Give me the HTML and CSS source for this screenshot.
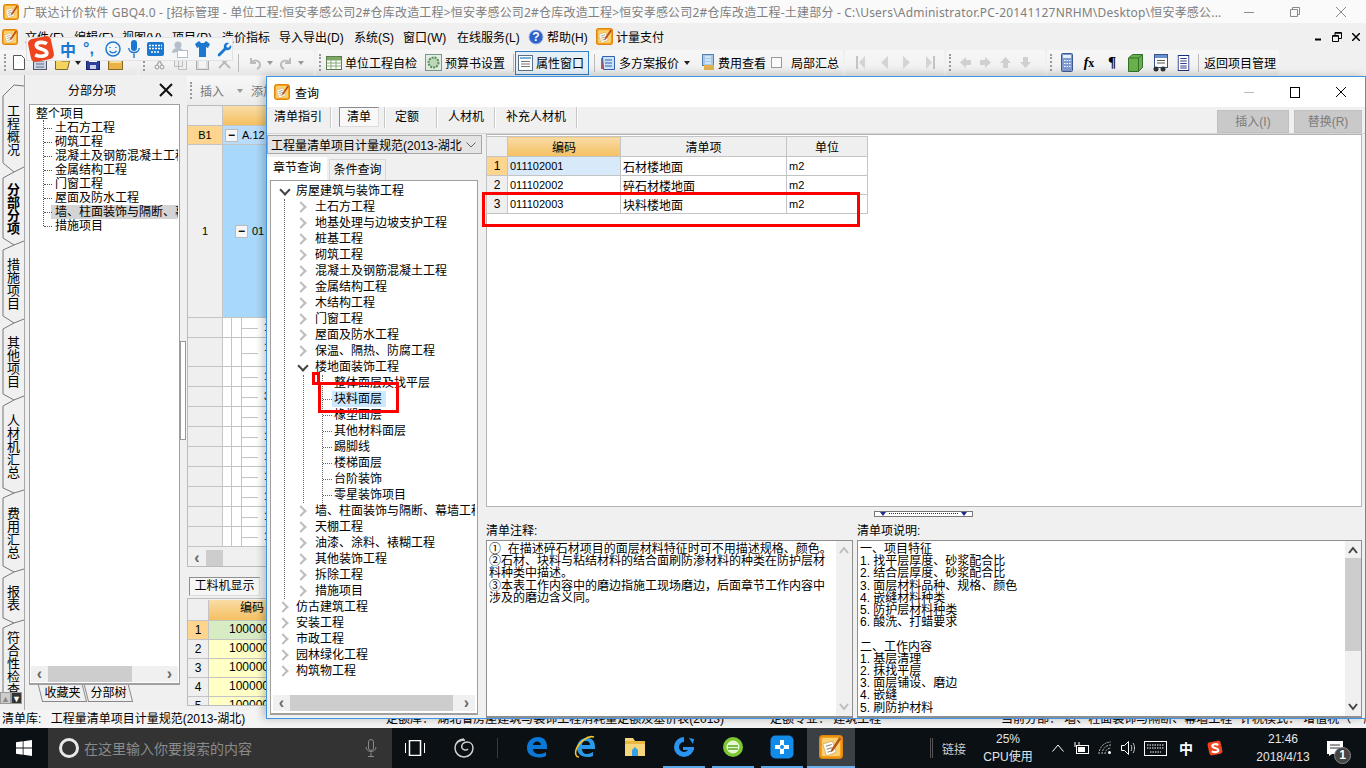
FILE: index.html
```html
<!DOCTYPE html>
<html lang="zh-CN">
<head>
  <meta charset="utf-8">
  <title>广联达计价软件 GBQ4.0</title>
  <link rel="stylesheet" href="styles.css">
</head>
<body>
  <svg class="icon-defs" width="0" height="0">
    <symbol id="i-logo" viewBox="0 0 16 16">
      <rect x=".5" y=".5" width="15" height="15" rx="2" fill="#f5a11c" stroke="#e0860e"/>
      <rect x="2" y="2" width="12" height="12" rx="1" fill="#fbd070"/>
      <path d="M2.500 6L9 4l2.500 7.500L5 14z" fill="#fffdf4" stroke="#c9a060" stroke-width=".5"/>
      <path d="M4.500 7.500l4-1.200M5 9.500l4-1.200M5.600 11.500l3-1" stroke="#8a8a80" stroke-width=".7"/>
      <path d="M13.500 1.500L15 2.500 9.500 10.500 8 11.500l.3-2z" fill="#b8501a"/>
    </symbol>
    <symbol id="i-sogou" viewBox="0 0 24 24">
      <rect x="2" y="2" width="20" height="20" rx="4" fill="#f0441e" transform="rotate(-12 12 12)"/>
      <path d="M17 7.500C14 5.500 8 6 8 9c0 3.500 9 2.500 9 6.500 0 3-6 3.500-10 1.500" fill="none" stroke="#fff" stroke-width="3.200"/>
    </symbol>
    <symbol id="i-sheet" viewBox="0 0 16 16">
      <rect x=".5" y="1.500" width="15" height="13" fill="#fff" stroke="#5d7a4a"/>
      <path d="M.5 5h15M.5 8h15M.5 11h15M5 1.500v13M10 1.500v13" stroke="#8aa878"/>
      <rect x="1" y="2" width="14" height="3" fill="#7ea866"/>
    </symbol>
    <symbol id="i-list" viewBox="0 0 16 16">
      <rect x="1.500" y=".5" width="13" height="15" fill="#fff" stroke="#1b2d80"/>
      <path d="M4 3.500h8M4 6h8M4 8.500h8M4 11h8M4 13h8" stroke="#1b2d80"/>
    </symbol>
    <symbol id="i-up" viewBox="0 0 10 8"><path d="M1 7l4-5 4 5" fill="none" stroke="currentColor" stroke-width="2"/></symbol>
    <symbol id="i-down" viewBox="0 0 10 8"><path d="M1 1l4 5 4-5" fill="none" stroke="currentColor" stroke-width="2"/></symbol>
  </svg>

  <div class="titlebar">
    <svg class="app-logo"><use href="#i-logo"/></svg>
    <span class="titlebar-text">广联达计价软件 GBQ4.0 - [招标管理 - 单位工程:恒安孝感公司2#仓库改造工程&gt;恒安孝感公司2#仓库改造工程&gt;恒安孝感公司2#仓库改造工程-土建部分 - C:\Users\Administrator.PC-20141127NRHM\Desktop\恒安孝感公...</span>
    <div class="win-controls muted">
      <svg width="10" height="10"><path d="M0 5.500h10" stroke="currentColor"/></svg>
      <svg width="10" height="10"><path d="M.5 2.500h7v7h-7zM2.500 2.500v-2h7v7h-2" fill="none" stroke="currentColor"/></svg>
      <svg width="10" height="10"><path d="M0 0l10 10M10 0L0 10" stroke="currentColor"/></svg>
    </div>
  </div>

  <div class="menubar">
    <svg class="app-logo"><use href="#i-logo"/></svg>
    <span class="menu-item m-file">文件(F)</span>
    <span class="menu-item m-w48">编辑(E)</span>
    <span class="menu-item m-w50">视图(V)</span>
    <span class="menu-item m-w50">项目(P)</span>
    <span class="menu-item m-w57">造价指标</span>
    <span class="menu-item m-w75">导入导出(D)</span>
    <span class="menu-item m-w49">系统(S)</span>
    <span class="menu-item m-w54">窗口(W)</span>
    <span class="menu-item m-w71">在线服务(L)</span>
    <svg class="menu-icon" width="16" height="16" viewBox="0 0 16 16"><circle cx="8" cy="8" r="7" fill="#2f62c8" stroke="#9ab4ea"/><text x="8" y="12" class="help-mark">?</text></svg>
    <span class="menu-item m-w49">帮助(H)</span>
    <svg class="menu-icon" width="17" height="17" viewBox="0 0 16 16"><use href="#i-logo"/></svg>
    <span class="menu-item">计量支付</span>
    <div class="win-controls mdi">
      <svg width="9" height="9"><path d="M2 7.500h6" stroke="#000" stroke-width="2"/></svg>
      <svg width="10" height="10"><path d="M.5 3.500h6v6h-6zM3 3V.5h6.500v6H7" fill="none" stroke="#000"/><path d="M1 4h5M3 1h6" stroke="#000" stroke-width="1.500"/></svg>
      <svg width="8" height="8"><path d="M0 0l8 8M8 0L0 8" stroke="#000" stroke-width="1.500"/></svg>
    </div>
  </div>

  <div class="toolbar">
    <div class="tb-group g-file">
      <i class="grip"></i>
      <svg class="tb-icon first" width="12" height="15"><path d="M.5.5h8l3 3v11H.5z" fill="#fff" stroke="#555"/></svg>
      <svg class="tb-icon" width="14" height="15" viewBox="0 0 14 15"><rect x=".5" y=".5" width="13" height="14" fill="#c8d6e8" stroke="#556"/><path d="M3 3h8M3 6h8M3 9h8M3 12h8" stroke="#667"/></svg>
      <svg class="tb-icon" width="15" height="14" viewBox="0 0 15 14"><path d="M.5 3.500h5l1 1.500h8l-2 8.500H.5z" fill="#f4d35e" stroke="#7a6a20"/></svg>
      <i class="caret"></i>
      <svg class="tb-icon gap-save" width="14" height="14"><rect x=".5" y=".5" width="13" height="13" fill="#2b3f9c" stroke="#1a2466"/><rect x="3" y="1" width="8" height="5" fill="#fff"/><rect x="4" y="9" width="6" height="4" fill="#c9cfe6"/></svg>
      <svg class="tb-icon" width="15" height="14"><rect x=".5" y=".5" width="14" height="13" fill="#e8b44a" stroke="#8a6a20"/><rect x="2" y="2" width="11" height="5" fill="#f6dc9a"/></svg>
    </div>
    <div class="tb-group g-edit">
      <i class="grip"></i>
      <svg class="tb-icon w-cut" width="11" height="14"><path d="M3 0l5 9M8 0L3 9" stroke="#aaa" stroke-width="1.500"/><circle cx="3" cy="11" r="2" fill="none" stroke="#999"/><circle cx="8" cy="11" r="2" fill="none" stroke="#999"/></svg>
      <svg class="tb-icon" width="13" height="14"><path d="M.5.5h8v10h-8zM4.500 3.500h8v10h-8z" fill="#eee" stroke="#bbb"/></svg>
      <svg class="tb-icon" width="13" height="14"><rect x=".5" y="1.500" width="12" height="12" fill="#ddd" stroke="#aaa"/><rect x="3" y="4" width="7" height="8" fill="#f4f4f4"/></svg>
      <svg class="tb-icon" width="13" height="13"><path d="M1 1l11 11M12 1L1 12" stroke="#bbb" stroke-width="2"/></svg>
      <i class="tb-sep sep-a"></i>
      <svg class="tb-icon" width="14" height="14"><path d="M3 2v5h5M3 7c3-4 9-3 9 2 0 2-1 3-3 4" fill="none" stroke="#bbb" stroke-width="2"/></svg>
      <i class="caret light"></i>
      <svg class="tb-icon gap-redo" width="14" height="14"><path d="M11 2v5H6M11 7C8 3 2 4 2 9c0 2 1 3 3 4" fill="none" stroke="#bbb" stroke-width="2"/></svg>
      <i class="caret light"></i>
    </div>
    <div class="tb-group g-main">
      <i class="grip"></i>
      <svg class="tb-icon" width="16" height="16"><use href="#i-sheet"/></svg>
      <span class="tb-label">单位工程自检</span>
      <svg class="tb-icon wide" width="17" height="17" viewBox="0 0 17 17"><rect x=".5" y=".5" width="16" height="16" fill="#dfeee0" stroke="#7a9a88"/><circle cx="8.500" cy="8.500" r="5" fill="#bcd8b8" stroke="#5f8a60" stroke-dasharray="2 1" stroke-width="2"/></svg>
      <span class="tb-label">预算书设置</span>
      <i class="tb-sep sep-b"></i>
      <div class="tb-toggle">
        <svg class="tb-icon" width="15" height="16"><rect x=".5" y=".5" width="14" height="15" fill="#fff" stroke="#5a7088"/><path d="M2 3h11" stroke="#78b0d8" stroke-width="2"/><path d="M3 6.500h9M3 9h9M3 11.500h9" stroke="#777"/></svg>
        <span class="tb-label">属性窗口</span>
      </div>
      <i class="tb-sep sep-c"></i>
      <svg class="tb-icon" width="16" height="16"><path d="M1 3h3v11H1z" fill="#d9524a"/><path d="M2.500 1.500h12v13h-11z" fill="#cfe2f6" stroke="#2d63b5"/><path d="M5 5h7M5 8h7M5 11h7" stroke="#2d63b5"/></svg>
      <span class="tb-label">多方案报价</span>
      <i class="caret"></i>
      <svg class="tb-icon far" width="14" height="17"><rect x="1.500" y=".5" width="11" height="11" fill="#a8c8ea" stroke="#5580b0"/><path d="M4 3h6M4 6h6M4 9h6" stroke="#fff"/><rect x="3" y="11" width="10" height="5" fill="#e0b050"/></svg>
      <span class="tb-label">费用查看</span>
      <i class="tb-check"></i>
      <span class="tb-label">局部汇总</span>
    </div>
    <div class="tb-group g-nav">
      <svg width="9" height="15"><path d="M1 1v13" stroke="#c4c4c4" stroke-width="2"/><path d="M9 1v13L3 7.500z" fill="#d4d4d4"/></svg>
      <svg width="8" height="15"><path d="M8 1v13L1 7.500z" fill="#d4d4d4"/></svg>
      <svg width="8" height="15"><path d="M0 1v13l7-6.500z" fill="#d4d4d4"/></svg>
      <svg width="9" height="15"><path d="M8 1v13" stroke="#c4c4c4" stroke-width="2"/><path d="M0 1v13l6-6.500z" fill="#d4d4d4"/></svg>
    </div>
    <div class="tb-group g-move">
      <i class="grip"></i>
      <svg class="tb-icon" width="11" height="11"><path d="M0 5.500L6 0v3h5v5H6v3z" fill="#d0d0d0"/></svg>
      <svg class="tb-icon" width="11" height="11"><path d="M11 5.500L5 0v3H0v5h5v3z" fill="#d0d0d0"/></svg>
      <svg class="tb-icon" width="11" height="11"><path d="M5.500 0L11 6H8v5H3V6H0z" fill="#d0d0d0"/></svg>
      <svg class="tb-icon" width="11" height="11"><path d="M5.500 11L11 5H8V0H3v5H0z" fill="#d0d0d0"/></svg>
    </div>
    <div class="tb-group g-tools">
      <i class="grip"></i>
      <svg class="tb-icon" width="12" height="19"><rect x=".5" y=".5" width="11" height="18" rx="1" fill="#7f9ad0" stroke="#3c5a90"/><rect x="2" y="2" width="8" height="3" fill="#e6eefc"/><path d="M3 7.500h1.500m1 0H7m1 0h1.500M3 10.500h1.500m1 0H7m1 0h1.500M3 13.500h1.500m1 0H7m1 0h1.500" stroke="#fff"/></svg>
      <span class="tb-glyph fx"><em>f</em>x</span>
      <span class="tb-glyph pilcrow">¶</span>
      <svg class="tb-icon" width="15" height="18"><path d="M.5 4l4-3.500h10v13L10.500 17.500H.5z" fill="#67b04a" stroke="#35702a"/><path d="M.5 4h10v13.500M10.500 4l4-3.500" fill="none" stroke="#35702a"/></svg>
      <svg class="tb-icon" width="16" height="18"><rect x="2.500" y=".5" width="13" height="13" fill="#fff" stroke="#35528a"/><path d="M3 2.500h12" stroke="#6c8fd0" stroke-width="3"/><path d="M5 6.500h8M5 9h8" stroke="#555"/><circle cx="4" cy="15" r="2.500" fill="#333"/><circle cx="11" cy="15" r="2.500" fill="#333"/></svg>
      <svg class="tb-icon" width="13" height="16" viewBox="0 0 16 16" preserveAspectRatio="none"><use href="#i-list"/></svg>
      <i class="tb-sep"></i>
      <span class="tb-label">返回项目管理</span>
    </div>
  </div>

  <div class="workspace">
    <div class="rail">
      <div class="rail-tab h-84">工程概况</div>
      <div class="rail-tab h-73 active">分部分项</div>
      <div class="rail-tab h-78">措施项目</div>
      <div class="rail-tab h-77">其他项目</div>
      <div class="rail-tab h-93">人材机汇总</div>
      <div class="rail-tab h-79">费用汇总</div>
      <div class="rail-tab h-51">报表</div>
      <div class="rail-tab h-80">符合性检查</div>
      <svg class="rail-lines" width="25" height="635" viewBox="0 75 25 635">
        <path d="M24.500 75V710" fill="none" stroke="#a8a8a8"/>
        <path d="M24 86L14 85 3 96V163L14 172 24 167M3 178L14 172M3 178V238L14 245 24 241M3 250L14 245M3 250V316L14 323 24 319M3 329L14 323M3 329V394L14 400 24 396M3 406L14 400M3 406V488L14 493 24 490M3 498L14 493M3 498V566L14 572 24 569M3 578L14 572M3 578V618L14 623 24 620M3 628L14 623M3 628V692" fill="none" stroke="#777"/>
      </svg>
      <div class="rail-arrows">
        <span class="rail-arrow off">▲</span>
        <span class="rail-arrow">▼</span>
      </div>
    </div>

    <div class="nav-pane">
      <div class="nav-head">
        <span>分部分项</span>
        <svg width="14" height="14"><path d="M1 1l12 12M13 1L1 13" stroke="#111" stroke-width="2"/></svg>
      </div>
      <div class="nav-tree">
        <div class="nav-root">整个项目</div>
        <div class="nav-children">
          <div class="nav-item">土石方工程</div>
          <div class="nav-item">砌筑工程</div>
          <div class="nav-item">混凝土及钢筋混凝土工程</div>
          <div class="nav-item">金属结构工程</div>
          <div class="nav-item">门窗工程</div>
          <div class="nav-item">屋面及防水工程</div>
          <div class="nav-item selected">墙、柱面装饰与隔断、幕墙工程</div>
          <div class="nav-item">措施项目</div>
        </div>
        <div class="scrollbar-h nav-scroll">
          <span class="sb-arrow">‹</span><i class="sb-thumb"></i><span class="sb-arrow">›</span>
        </div>
      </div>
      <div class="nav-tabs">
        <span class="nav-tab">收藏夹</span>
        <span class="nav-tab">分部树</span>
      </div>
    </div>

    <div class="splitter"><i class="splitter-grip"></i></div>

    <div class="grid-pane">
      <div class="sub-toolbar">
        <i class="grip"></i>
        <span class="sub-label">插入</span>
        <i class="caret light"></i>
        <span class="sub-label">添加</span>
      </div>
      <div class="sheet">
        <div class="sheet-row head"><i class="num"></i><i class="cell-head"></i></div>
        <div class="sheet-row b1"><span class="num hot">B1</span><span class="sheet-body"><b class="toggle">−</b>A.12</span></div>
        <div class="sheet-row one"><span class="num">1</span><span class="sheet-body"><b class="toggle">−</b>01</span></div>
        <div class="sheet-row leaf h20"><i class="num"></i><i class="c1"></i><i class="c2"></i><span class="c3">1</span></div>
        <div class="sheet-row leaf h29"><i class="num"></i><i class="c1"></i><i class="c2"></i><span class="c3">1</span></div>
        <div class="sheet-row leaf h20"><i class="num"></i><i class="c1"></i><i class="c2"></i><span class="c3">1</span></div>
        <div class="sheet-row leaf h20"><i class="num"></i><i class="c1"></i><i class="c2"></i><span class="c3">3</span></div>
        <div class="sheet-row leaf h20"><i class="num"></i><i class="c1"></i><i class="c2"></i><span class="c3">1</span></div>
        <div class="sheet-row leaf h20"><i class="num"></i><i class="c1"></i><i class="c2"></i><span class="c3">1</span></div>
        <div class="sheet-row leaf h20"><i class="num"></i><i class="c1"></i><i class="c2"></i><span class="c3">1</span></div>
        <div class="sheet-row leaf h20"><i class="num"></i><i class="c1"></i><i class="c2"></i><span class="c3">1</span></div>
        <div class="sheet-row leaf h20"><i class="num"></i><i class="c1"></i><i class="c2"></i><span class="c3">1</span></div>
        <div class="sheet-row leaf h20"><i class="num"></i><i class="c1"></i><i class="c2"></i><span class="c3">1</span></div>
        <div class="sheet-row leaf h20"><i class="num"></i><i class="c1"></i><i class="c2"></i><span class="c3">1</span></div>
        <div class="scrollbar-h sheet-scroll"><span class="sb-arrow">‹</span><i class="sb-thumb"></i></div>
      </div>
      <div class="labor-tabs"><span class="labor-tab">工料机显示</span></div>
      <div class="labor">
        <div class="labor-row head"><i class="num"></i><span class="code">编码</span></div>
        <div class="labor-row first"><span class="num hot">1</span><span class="code">100000</span></div>
        <div class="labor-row"><span class="num">2</span><span class="code">100000</span></div>
        <div class="labor-row"><span class="num">3</span><span class="code">100000</span></div>
        <div class="labor-row"><span class="num">4</span><span class="code">100000</span></div>
        <div class="labor-row"><span class="num">5</span><span class="code">100000</span></div>
      </div>
    </div>
  </div>

  <div class="statusbar">
    <span class="st-lib">清单库:&ensp;&nbsp;工程量清单项目计量规范(2013-湖北)</span>
    <span class="st-quota">定额库：&nbsp;湖北省房屋建筑与装饰工程消耗量定额及基价表(2013)</span>
    <span class="st-major">定额专业：&nbsp;建筑工程</span>
    <span class="st-part">当前分部：&nbsp;墙、柱面装饰与隔断、幕墙工程</span>
    <span class="st-tax">计税模式：&nbsp;增值税（一般</span>
  </div>

  <div class="taskbar">
    <svg class="win-logo" width="16" height="16" viewBox="0 0 16 16"><path d="M0 2.300l6.700-1v6.300H0zM7.500 1.200L16 0v7.600H7.500zM0 8.400h6.700v6.300l-6.700-1zM7.500 8.400H16V16l-8.500-1.200z" fill="#fff"/></svg>
    <div class="search-box">
      <i class="cortana"></i>
      <span class="search-text">在这里输入你要搜索的内容</span>
      <svg width="12" height="18" viewBox="0 0 12 18"><rect x="3.500" y=".5" width="5" height="11" rx="2.500" fill="none" stroke="#888"/><path d="M1 8c0 6 10 6 10 0M6 13.500v4M3 17.500h6" fill="none" stroke="#888"/></svg>
    </div>
    <div class="task-apps">
      <svg class="t-view" width="20" height="16"><rect x="4.500" y=".5" width="11" height="15" fill="none" stroke="#fff" stroke-width="1.500"/><path d="M.5 3v10M19.500 3v10" stroke="#fff"/></svg>
      <svg class="t-spiral" width="22" height="22" viewBox="0 0 22 22"><path d="M11 2a9 9 0 1 0 9 9c0-4-3-6-6-6-4 0-6 3-5 6 1 2 4 3 6 1M3 7c2-3 5-4 9-4" fill="none" stroke="#cfcfcf" stroke-width="1.500"/></svg>
      <i class="t-div"></i>
      <div class="t-app">
        <svg width="22" height="22" viewBox="0 0 22 22"><path d="M1 12C1 5 6 1 12 1c6 0 9 4 9 10v2H7c0 3 3 5 6 5 3 0 5-1 7-2v4c-2 1-5 1.500-7 1.500C6 21.500 1 18 1 12zm6-3h8c0-2-2-3.500-4-3.500S7 7 7 9z" fill="#0a78d6"/></svg>
      </div>
      <div class="t-app">
        <svg width="24" height="24" viewBox="0 0 24 24"><path d="M3 13c0-6 4-10 10-10s8 4 8 9v2H8c0 3 2 5 5 5 2 0 4-1 6-2v4c-2 1-4 1-6 1-6 0-10-4-10-9zm5-3h8c0-2-1-4-4-4s-4 2-4 4z" fill="#2a9ae8"/><path d="M20 2c-6-2-15 5-18 13-1 4 0 7 3 7" fill="none" stroke="#f2c230" stroke-width="1.600"/></svg>
      </div>
      <div class="t-app">
        <svg width="22" height="20" viewBox="0 0 22 20"><path d="M1 1h8l2 3h10v15H1z" fill="#f6d67a"/><path d="M1 4h20v3H1z" fill="#eab83e"/><path d="M8 19v-6l3-3 3 3v6z" fill="#35a0e8"/></svg>
      </div>
      <div class="t-app running">
        <svg width="22" height="22" viewBox="0 0 22 22"><path d="M11 1a10 10 0 1 0 10 10h-5a5 5 0 1 1-5-5z" fill="#2a94ee"/><path d="M10 11h11v3H10z" fill="#2a94ee"/><path d="M16 2l5 1-1 5z" fill="#2a94ee"/></svg>
      </div>
      <div class="t-app running">
        <svg width="22" height="24" viewBox="0 0 22 24"><circle cx="11" cy="12" r="10" fill="#7dc832"/><circle cx="11" cy="12" r="6.500" fill="#e6f6d0"/><path d="M6 11h10M6 14h10" stroke="#5aa820" stroke-width="1.500"/></svg>
      </div>
      <div class="t-app running">
        <svg width="24" height="24" viewBox="0 0 24 24"><rect x=".5" y=".5" width="23" height="23" rx="5" fill="#128ce8"/><path d="M10 5h4v5h5v4h-5v5h-4v-5H5v-4h5z" fill="#fff"/><circle cx="12" cy="12" r="2" fill="#128ce8"/></svg>
      </div>
      <div class="t-app running active">
        <svg width="24" height="24" viewBox="0 0 16 16"><use href="#i-logo"/></svg>
      </div>
    </div>
    <div class="tray">
      <i class="t-div double"></i>
      <span class="tray-link">链接</span>
      <div class="tray-cpu"><span>25%</span><span>CPU使用</span></div>
      <svg class="tray-up" width="12" height="8"><path d="M.5 7.500L6 1l5.500 6.500" fill="none" stroke="#fff"/></svg>
      <svg width="16" height="12"><rect x="3.500" y="3.500" width="12" height="8" fill="none" stroke="#fff"/><rect x="5" y="5" width="7" height="5" fill="#fff"/><path d="M2 0v5M6 0v3" stroke="#fff"/></svg>
      <svg width="14" height="14" viewBox="0 0 14 14"><path d="M1 13a12 12 0 0 1 12-12M4 13a9 9 0 0 1 9-9M7 13a6 6 0 0 1 6-6" fill="none" stroke="#bbb" stroke-dasharray="2 1"/><circle cx="11.500" cy="11.500" r="1.500" fill="#fff"/></svg>
      <svg width="14" height="14" viewBox="0 0 14 14"><path d="M.5 4.500h3l4-4v13l-4-4h-3z" fill="none" stroke="#fff"/><path d="M10 4c1 2 1 4 0 6M12 2c2 3 2 7 0 10" fill="none" stroke="#ccc"/></svg>
      <svg width="23" height="15"><rect x=".5" y=".5" width="22" height="14" fill="none" stroke="#fff"/><path d="M3 4h17M3 7h17M6 11h11" stroke="#fff" stroke-dasharray="1.500 1"/></svg>
      <span class="tray-lang">中</span>
      <svg width="16" height="18" viewBox="0 0 24 24"><use href="#i-sogou"/></svg>
      <div class="tray-clock"><span>21:46</span><span>2018/4/13</span></div>
      <div class="tray-note">
        <svg width="17" height="15"><path d="M0 0h16v13H5l-3 2v-2H0z" fill="#fff"/><path d="M3 4h10M3 7h10" stroke="#333"/></svg>
        <span class="note-badge">1</span>
      </div>
    </div>
  </div>

  <!-- 查询 dialog, floats over the main window -->
  <div class="dialog">
    <div class="dlg-title">
      <svg width="16" height="16"><use href="#i-logo"/></svg>
      <span>查询</span>
      <div class="win-controls">
        <svg width="10" height="10"><path d="M0 5.500h10" stroke="#bbb"/></svg>
        <svg width="10" height="11"><rect x=".5" y=".5" width="9" height="10" fill="none" stroke="#000"/></svg>
        <svg width="10" height="10"><path d="M0 0l10 10M10 0L0 10" stroke="#000"/></svg>
      </div>
    </div>
    <div class="dlg-tabs">
      <span class="dlg-tab t-guide">清单指引</span>
      <i class="dlg-sep"></i>
      <span class="dlg-tab pressed">清单</span>
      <i class="dlg-sep"></i>
      <span class="dlg-tab t-quota">定额</span>
      <i class="dlg-sep"></i>
      <span class="dlg-tab t-labor">人材机</span>
      <i class="dlg-sep"></i>
      <span class="dlg-tab t-extra">补充人材机</span>
      <i class="dlg-sep"></i>
      <div class="dlg-actions">
        <button class="dlg-btn b-insert" disabled>插入(I)</button>
        <button class="dlg-btn b-replace" disabled>替换(R)</button>
      </div>
    </div>
    <div class="dlg-body">
      <div class="dlg-left">
        <div class="combo"><span>工程量清单项目计量规范(2013-湖北</span><svg width="10" height="6"><path d="M.5.5L5 5 9.500.5" fill="none" stroke="#666"/></svg></div>
        <div class="left-tabs">
          <span class="left-tab active">章节查询</span>
          <span class="left-tab">条件查询</span>
        </div>
        <div class="tree">
          <div class="tree-scroll-area">
            <div class="row l0 open">房屋建筑与装饰工程</div>
            <div class="branch">
              <div class="row l1">土石方工程</div>
              <div class="row l1">地基处理与边坡支护工程</div>
              <div class="row l1">桩基工程</div>
              <div class="row l1">砌筑工程</div>
              <div class="row l1">混凝土及钢筋混凝土工程</div>
              <div class="row l1">金属结构工程</div>
              <div class="row l1">木结构工程</div>
              <div class="row l1">门窗工程</div>
              <div class="row l1">屋面及防水工程</div>
              <div class="row l1">保温、隔热、防腐工程</div>
              <div class="row l1 open">楼地面装饰工程</div>
              <div class="branch sub">
                <div class="leaves">
                  <div class="row l2">整体面层及找平层</div>
                  <div class="row l2"><span class="picked">块料面层</span></div>
                  <div class="row l2">橡塑面层</div>
                  <div class="row l2">其他材料面层</div>
                  <div class="row l2">踢脚线</div>
                  <div class="row l2">楼梯面层</div>
                  <div class="row l2">台阶装饰</div>
                  <div class="row l2">零星装饰项目</div>
                </div>
              </div>
              <div class="row l1">墙、柱面装饰与隔断、幕墙工程</div>
              <div class="row l1">天棚工程</div>
              <div class="row l1">油漆、涂料、裱糊工程</div>
              <div class="row l1">其他装饰工程</div>
              <div class="row l1">拆除工程</div>
              <div class="row l1">措施项目</div>
            </div>
            <div class="row l0">仿古建筑工程</div>
            <div class="row l0">安装工程</div>
            <div class="row l0">市政工程</div>
            <div class="row l0">园林绿化工程</div>
            <div class="row l0">构筑物工程</div>
          </div>
          <div class="scrollbar-h tree-scroll">
            <span class="sb-arrow">‹</span><i class="sb-thumb"></i><span class="sb-arrow">›</span>
          </div>
        </div>
      </div>
      <div class="dlg-right">
        <div class="result">
          <table class="result-table">
            <thead>
              <tr><th class="col-n"></th><th class="col-code hot-head">编码</th><th class="col-name">清单项</th><th class="col-unit">单位</th></tr>
            </thead>
            <tbody>
              <tr class="current"><td class="col-n hot">1</td><td class="code-cell">011102001</td><td>石材楼地面</td><td class="unit-cell">m2</td></tr>
              <tr><td class="col-n">2</td><td class="code-cell">011102002</td><td>碎石材楼地面</td><td class="unit-cell">m2</td></tr>
              <tr><td class="col-n">3</td><td class="code-cell">011102003</td><td>块料楼地面</td><td class="unit-cell">m2</td></tr>
            </tbody>
          </table>
        </div>
        <div class="v-splitter"><span class="v-grip"><i></i><b></b><i></i></span></div>
        <div class="notes">
          <div class="note left">
            <div class="note-label">清单注释:</div>
            <div class="note-box">
              <div class="note-text">①&nbsp;&nbsp;在描述碎石材项目的面层材料特征时可不用描述规格、颜色。<br>②石材、块料与粘结材料的结合面刷防渗材料的种类在防护层材<br>料种类中描述。<br>③本表工作内容中的磨边指施工现场磨边，后面章节工作内容中<br>涉及的磨边含义同。</div>
              <div class="scrollbar-v flat">
                <svg width="10" height="8"><use href="#i-up"/></svg>
                <svg width="10" height="8"><use href="#i-down"/></svg>
              </div>
            </div>
          </div>
          <div class="note right">
            <div class="note-label">清单项说明:</div>
            <div class="note-box">
              <div class="note-text">一、项目特征<br>1. 找平层厚度、砂浆配合比<br>2. 结合层厚度、砂浆配合比<br>3. 面层材料品种、规格、颜色<br>4. 嵌缝材料种类<br>5. 防护层材料种类<br>6. 酸洗、打蜡要求<br><br>二、工作内容<br>1. 基层清理<br>2. 抹找平层<br>3. 面层铺设、磨边<br>4. 嵌缝<br>5. 刷防护材料</div>
              <div class="scrollbar-v">
                <svg width="10" height="8"><use href="#i-up"/></svg>
                <i class="sb-thumb"></i>
                <svg width="10" height="8"><use href="#i-down"/></svg>
              </div>
            </div>
          </div>
        </div>
      </div>
    </div>
  </div>

  <!-- red annotation boxes and the input method bar sit on top of everything -->
  <i class="mark mark-row"></i>
  <i class="mark mark-node"></i>
  <i class="mark mark-tick"></i>

  <div class="ime-bar">
    <svg class="ime-logo" width="28" height="28" viewBox="0 0 24 24"><use href="#i-sogou"/></svg>
    <span class="ime-lang">中</span>
    <span class="ime-punct">°,</span>
    <svg width="16" height="16"><circle cx="8" cy="8" r="7" fill="none" stroke="#1b78d0" stroke-width="1.500"/><path d="M5 6v1M11 6v1M4.500 10c2 2.500 5 2.500 7 0" fill="none" stroke="#1b78d0" stroke-width="1.300"/></svg>
    <svg width="12" height="18"><rect x="3" y="0" width="6" height="11" rx="3" fill="#1b78d0"/><path d="M.8 8c0 6 10.400 6 10.400 0M6 13.500V18" fill="none" stroke="#1b78d0" stroke-width="1.400"/></svg>
    <svg width="17" height="14"><rect x="0" y="0" width="17" height="14" rx="2" fill="#1b78d0"/><path d="M2 3.500h13M2 6.500h13M4 10h9" stroke="#fff" stroke-width="1.400" stroke-dasharray="2 1"/></svg>
    <svg width="17" height="17"><circle cx="7" cy="4" r="3.500" fill="#b4bec8"/><path d="M1 12c0-4 3-5 6-5s5 1 5 3" fill="#b4bec8"/><rect x="6.500" y="9.500" width="10" height="7" fill="#fff" stroke="#b4bec8"/></svg>
    <svg width="15" height="16"><path d="M4 0L0 3l2 4 2-1v10h7V6l2 1 2-4-4-3-2 2H6z" fill="#1b78d0"/></svg>
    <svg width="15" height="15"><path d="M14 3l-3 3-2-2 3-3c-3-1-6 1-5 5L1 12c-1 2 1 3 2 2l6-6c4 1 6-2 5-5z" fill="#1b78d0"/></svg>
  </div>
</body>
</html>
```

FILE: styles.css
```css
* {
  margin: 0;
  padding: 0;
  box-sizing: border-box;
}

html, body {
  width: 1366px;
  height: 768px;
  overflow: hidden;
}

body {
  position: relative;
  display: flex;
  flex-direction: column;
  background-color: #f0f0f0;
  color: #000;
  font-family: "Liberation Sans", "Noto Sans CJK SC", sans-serif;
  font-size: 12px;
}

i, b, em {
  font-style: normal;
}

svg {
  flex: none;
  display: block;
}

.icon-defs {
  position: absolute;
}

/* title and menu */
.titlebar {
  height: 23px;
  display: flex;
  align-items: center;
  background-color: #fafafa;
  padding-left: 3px;
  color: #808080;
}

.app-logo {
  width: 16px;
  height: 16px;
}

.titlebar-text {
  margin-left: 4px;
  white-space: nowrap;
  letter-spacing: 0.2px;
  font-family: "Noto Sans", "Noto Sans CJK SC", sans-serif;
}

.win-controls {
  margin-left: auto;
  display: flex;
  align-items: center;
  gap: 36px;
  padding-right: 20px;
}

.win-controls.muted {
  color: #8a8a8a;
}

.menubar {
  height: 27px;
  display: flex;
  align-items: center;
  padding-left: 2px;
  background-color: #f0f0f0;
}

.menu-item {
  white-space: nowrap;
}

.m-file { width: 49px; margin-left: 7px; }
.m-w48 { width: 48px; }
.m-w50 { width: 50px; }
.m-w57 { width: 57px; }
.m-w75 { width: 75px; }
.m-w49 { width: 49px; }
.m-w54 { width: 54px; }
.m-w71 { width: 71px; }

.menu-icon {
  margin-right: 3px;
}

.help-mark {
  fill: #fff;
  font-size: 12px;
  font-weight: bold;
  text-anchor: middle;
}

.win-controls.mdi {
  gap: 10px;
  padding-right: 6px;
}

/* toolbar */
.toolbar {
  height: 25px;
  display: flex;
  background-color: #f0f0f0;
}

.tb-group {
  display: flex;
  align-items: center;
  height: 25px;
  border-radius: 3px;
  background: linear-gradient(#f7f7f7, #f2f2f2 60%, #e6e6e6);
  flex: none;
  margin-right: 2px;
}

.g-file { width: 137px; padding-left: 4px; }
.g-edit { width: 175px; padding-left: 4px; }
.g-main { width: 527px; padding-left: 3px; }
.g-nav { width: 99px; padding-left: 11px; gap: 15px; }
.g-move { width: 99px; padding-left: 3px; }
.g-tools { width: 232px; padding-left: 3px; }

.grip {
  width: 2px;
  height: 17px;
  flex: none;
  border-left: 2px dotted #999;
}

.tb-icon {
  margin-left: 8px;
}

.g-file .first { margin-left: 7px; }
.g-file .gap-save { margin-left: 5px; }
.g-edit .w-cut { margin-left: 6px; }
.g-edit .tb-icon { margin-left: 9px; }
.g-edit .sep-a { margin: 0 0 0 7px; }
.g-edit .gap-redo { margin-left: 6px; }
.g-edit .caret { margin-left: 5px; }
.g-main .tb-icon { margin-left: 5px; }
.g-main .tb-icon.wide { margin-left: 8px; }
.g-main .tb-icon.far { margin-left: 11px; }
.g-move .tb-icon { margin-left: 9px; }
.g-tools .tb-icon { margin-left: 9px; }

.caret {
  width: 0;
  height: 0;
  flex: none;
  margin-left: 5px;
  border-left: 3px solid transparent;
  border-right: 3px solid transparent;
  border-top: 4px solid #222;
}

.caret.light {
  border-top-color: #999;
}

.tb-label {
  margin-left: 3px;
  white-space: nowrap;
}

.tb-sep {
  width: 1px;
  height: 18px;
  flex: none;
  margin: 0 2px 0 8px;
  background-color: #bbb;
}

.tb-sep.sep-b { margin: 0 1px 0 8px; }
.tb-sep.sep-c { margin: 0 0 0 5px; }

.tb-toggle {
  height: 24px;
  width: 74px;
  display: flex;
  align-items: center;
  border: 1px solid #2a7fc8;
  background-color: #e6eef6;
  flex: none;
}

.tb-toggle .tb-icon {
  margin-left: 2px;
}

.tb-check {
  width: 11px;
  height: 11px;
  flex: none;
  margin: 0 6px 0 5px;
  border: 1px solid #9a9a9a;
  background-color: #fafafa;
}

.tb-glyph {
  width: 14px;
  margin-left: 9px;
  text-align: center;
  font-family: "Liberation Serif", serif;
  font-weight: bold;
}

.tb-glyph.pilcrow {
  font-size: 15px;
}

.tb-glyph em {
  font-style: italic;
  font-size: 14px;
}

/* main window */
.workspace {
  height: 635px;
  display: flex;
  background-color: #f0f0f0;
}

.rail {
  position: relative;
  width: 25px;
  padding-top: 13px;
  flex: none;
}

.rail-tab {
  display: flex;
  align-items: center;
  justify-content: center;
  writing-mode: vertical-rl;
  text-orientation: upright;
  font-size: 13px;
  line-height: 25px;
  overflow: hidden;
}

.rail-tab.active {
  font-weight: bold;
}

.h-84 { height: 84px; }
.h-73 { height: 73px; }
.h-78 { height: 78px; }
.h-77 { height: 77px; }
.h-93 { height: 93px; }
.h-79 { height: 79px; }
.h-51 { height: 51px; }
.h-80 { height: 80px; }

.rail-lines {
  position: absolute;
  left: 0;
  top: 0;
}

.rail-arrows {
  position: absolute;
  left: 0;
  top: 617px;
  display: flex;
}

.rail-arrow {
  width: 11px;
  height: 12px;
  font-size: 9px;
  line-height: 12px;
  text-align: center;
  background-color: #333;
  color: #fff;
  border: 1px solid #999;
}

.rail-arrow.off {
  background-color: #ccc;
  color: #888;
}

.nav-pane {
  width: 151px;
  flex: none;
  margin-left: 4px;
  display: flex;
  flex-direction: column;
}

.nav-head {
  height: 29px;
  display: flex;
  align-items: center;
  justify-content: space-between;
  padding: 0 7px 0 39px;
  font-size: 12px;
}

.nav-tree {
  height: 581px;
  border: 1px solid #a0a0a0;
  border-bottom-width: 2px;
  background-color: #fff;
  padding: 2px 1px 1px;
  display: flex;
  flex-direction: column;
}

.nav-root {
  line-height: 14px;
  padding-left: 5px;
}

.nav-children {
  flex: 1;
  position: relative;
}

.nav-children::before {
  content: "";
  position: absolute;
  left: 12px;
  top: -1px;
  height: 106px;
  border-left: 1px dotted #555;
}

.nav-item {
  height: 14px;
  line-height: 14px;
  padding-left: 24px;
  white-space: nowrap;
  overflow: hidden;
  position: relative;
}

.nav-item::before {
  content: "";
  position: absolute;
  left: 13px;
  top: 7px;
  width: 8px;
  border-top: 1px dotted #555;
}

.nav-item.selected {
  background: linear-gradient(to right, transparent 20px, #d4d4d4 20px);
}

.scrollbar-h {
  display: flex;
  align-items: center;
  background-color: #f0f0f0;
  color: #666;
}

.sb-arrow {
  font-weight: bold;
  font-size: 16px;
  line-height: 14px;
  text-align: center;
  flex: none;
}

.sb-thumb {
  display: block;
  background-color: #cdcdcd;
}

.nav-scroll {
  height: 16px;
}

.nav-scroll .sb-arrow { width: 17px; }
.nav-scroll .sb-thumb { width: 84px; height: 16px; margin-right: auto; }

.nav-tabs {
  height: 18px;
  display: flex;
  gap: 1px;
  padding-left: 11px;
}

.nav-tab {
  position: relative;
  height: 17px;
  width: 45px;
  text-align: center;
  line-height: 16px;
}

.nav-tab::before {
  content: "";
  position: absolute;
  inset: 0;
  border: 1px solid #888;
  border-top: 0;
  transform: skewX(14deg);
}

.splitter {
  width: 7px;
  flex: none;
  position: relative;
}

.splitter-grip {
  position: absolute;
  left: 0;
  top: 266px;
  width: 6px;
  height: 99px;
  border: 1px solid #999;
  background-color: #fff;
}

.grid-pane {
  flex: 1;
  min-width: 0;
  display: flex;
  flex-direction: column;
}

.sub-toolbar {
  height: 29px;
  margin-top: 1px;
  display: flex;
  align-items: center;
  gap: 8px;
  padding-left: 3px;
  background: linear-gradient(#f7f7f7, #ececec);
  color: #777;
}

.sheet {
  height: 462px;
  border: 1px solid #bbb;
  border-right: 0;
  width: 100px;
  background-color: #efefef;
  display: flex;
  flex-direction: column;
  overflow: hidden;
}

.sheet-row {
  display: flex;
  flex: none;
  border-bottom: 1px solid #c4c4c4;
}

.num {
  width: 35px;
  flex: none;
  text-align: center;
  background-color: #efefef;
  border-right: 1px solid #c4c4c4;
  font-size: 11px;
  display: flex;
  align-items: center;
  justify-content: center;
}

.num.hot {
  background-color: #fed58e;
}

.sheet-row.head { height: 20px; }
.sheet-row.b1 { height: 19px; }
.sheet-row.one { height: 173px; }

.cell-head {
  flex: 1;
  background: linear-gradient(#f9dca6, #f5c061);
}

.sheet-body {
  flex: 1;
  display: flex;
  align-items: center;
  font-size: 11px;
  white-space: nowrap;
}

.b1 .sheet-body {
  background-color: #b8dcfa;
  padding-left: 2px;
}

.one .sheet-body {
  background-color: #a8d8fb;
  padding-left: 12px;
}

.toggle {
  width: 13px;
  height: 13px;
  flex: none;
  margin-right: 4px;
  text-align: center;
  line-height: 10px;
  font-size: 12px;
  background-color: #f6f6f6;
  border: 1px solid #bbb;
}

.h20 { height: 20px; }
.h29 { height: 29px; }

.c1, .c2 {
  width: 9px;
  background-color: #fff;
  border-right: 1px solid #c4c4c4;
  flex: none;
}

.c2 {
  width: 10px;
}

.c3 {
  flex: 1;
  background: linear-gradient(#c4c4c4, #c4c4c4) 0 55% / 16px 1px no-repeat #fff;
  padding-left: 22px;
  font-size: 10px;
  line-height: 19px;
}

.sheet-scroll {
  height: 16px;
  margin-top: auto;
}

.sheet-scroll .sb-arrow { width: 18px; }
.sheet-scroll .sb-thumb { width: 17px; height: 16px; }

.labor-tabs {
  height: 31px;
  display: flex;
  align-items: flex-end;
  padding: 0 0 2px 2px;
}

.labor-tab {
  width: 71px;
  height: 19px;
  line-height: 17px;
  text-align: center;
  border: 1px solid #8f8f8f;
  border-bottom-color: #ddd;
  border-right-color: #ddd;
  background-color: #f6f6f6;
}

.labor {
  height: 108px;
  width: 100px;
  border: 1px solid #bbb;
  overflow: hidden;
}

.labor-row {
  display: flex;
  height: 19px;
  border-bottom: 1px solid #c4c4c4;
}

.labor-row .num {
  width: 21px;
  font-size: 12px;
}

.labor-row .code {
  flex: 1;
  padding-left: 20px;
  line-height: 17px;
  background-color: #ffffc6;
  font-size: 12px;
}

.labor-row.first .code {
  background-color: #d8ecc4;
}

.labor-row.head {
  height: 21px;
  margin-top: 1px;
}

.labor-row.head .code {
  padding-left: 31px;
  background: linear-gradient(#f9dca6, #f5c061);
}

.statusbar {
  height: 18px;
  display: flex;
  background-color: #f4f4f4;
  line-height: 18px;
  white-space: nowrap;
  overflow: hidden;
}

.statusbar span {
  flex: none;
  padding-left: 2px;
}

.st-lib { width: 384px; }
.st-quota { width: 384px; }
.st-major { width: 231px; }
.st-part { width: 239px; }
.st-tax { width: 128px; overflow: hidden; }

/* taskbar */
.taskbar {
  height: 40px;
  display: flex;
  align-items: center;
  background-color: #0a1014;
  color: #e6e6e6;
  font-size: 12px;
}

.win-logo {
  margin: 0 16px;
}

.search-box {
  width: 344px;
  height: 40px;
  display: flex;
  align-items: center;
  background-color: #333;
  padding: 0 15px 0 11px;
  flex: none;
}

.cortana {
  width: 20px;
  height: 20px;
  flex: none;
  border: 3px solid #e8e8e8;
  border-radius: 50%;
}

.search-text {
  margin-left: 5px;
  font-size: 14px;
  color: #8a8a8a;
  flex: 1;
  white-space: nowrap;
}

.task-apps {
  display: flex;
  align-items: center;
  height: 40px;
  flex: none;
}

.t-view { margin-left: 13px; }
.t-spiral { margin-left: 28px; }

.t-div {
  width: 1px;
  height: 20px;
  flex: none;
  margin: 0 15px 0 22px;
  background-color: #3a3a3a;
}

.t-app {
  width: 48px;
  height: 40px;
  display: flex;
  align-items: center;
  justify-content: center;
  border-bottom: 2px solid transparent;
  flex: none;
  margin-left: 1px;
}

.t-app:first-of-type {
  margin-left: 0;
}

.t-app.running {
  border-image: linear-gradient(to right, transparent 4px, #5aa8e8 4px, #5aa8e8 44px, transparent 44px) 1;
}

.t-app.active {
  background-color: #3a4044;
  border-bottom-color: #6ab0ec;
  border-image: none;
}

.tray {
  flex: 1;
  display: flex;
  align-items: center;
  gap: 9px;
}

.t-div.double {
  width: 3px;
  margin: 0 0 0 75px;
  border-left: 1px solid #555;
  border-right: 1px solid #555;
  background: none;
}

.tray-link {
  white-space: nowrap;
  color: #ccc;
}

.tray-cpu, .tray-clock {
  display: flex;
  flex-direction: column;
  align-items: center;
  line-height: 18px;
  white-space: nowrap;
}

.tray-cpu {
  width: 66px;
  margin-right: 2px;
}

.tray-lang {
  font-size: 14px;
  font-weight: bold;
  color: #fff;
  margin: 0 5px 0 3px;
}

.tray-clock {
  width: 70px;
  margin-left: 16px;
}

.tray-note {
  position: relative;
}

.note-badge {
  position: absolute;
  left: 7px;
  top: 6px;
  width: 17px;
  height: 17px;
  border-radius: 50%;
  background-color: #444;
  border: 1px solid #888;
  color: #fff;
  font-weight: bold;
  text-align: center;
  line-height: 15px;
}

/* dialog */
.dialog {
  position: absolute;
  left: 266px;
  top: 76px;
  width: 1100px;
  height: 643px;
  display: flex;
  flex-direction: column;
  background-color: #f0f0f0;
  border: 1px solid #3d94e6;
  box-shadow: -3px 0 8px rgba(0, 0, 0, 0.22);
}

.dlg-title {
  height: 30px;
  flex: none;
  display: flex;
  align-items: center;
  gap: 5px;
  padding-left: 7px;
  background-color: #fff;
}

.dlg-title .win-controls {
  padding-right: 19px;
}

.dlg-tabs {
  height: 27px;
  flex: none;
  display: flex;
  align-items: flex-start;
  line-height: 20px;
  border-bottom: 1px solid #d4d4d4;
}

.dlg-tab {
  white-space: nowrap;
}

.dlg-sep {
  width: 2px;
  height: 21px;
  flex: none;
  background-color: #c8c8c8;
  border-right: 1px solid #fff;
}

.t-guide { margin: 0 8px 0 7px; }
.dlg-tab.pressed {
  width: 40px;
  height: 20px;
  margin: 0 5px 0 7px;
  line-height: 18px;
  text-align: center;
  border: 1px solid #8c8c8c;
  border-right-color: #ddd;
  border-bottom-color: #ddd;
  background-color: #f8f8f8;
}
.t-quota { margin: 0 17px 0 9px; }
.t-labor { margin: 0 10px 0 10px; }
.t-extra { margin: 0 10px 0 10px; }

.dlg-actions {
  margin-left: auto;
  display: flex;
  gap: 5px;
  padding-right: 3px;
  padding-top: 3px;
}

.dlg-btn {
  height: 23px;
  border: 1px solid #c0c0c0;
  background-color: #c9c9c9;
  color: #7c7c7c;
  font: inherit;
}

.b-insert { width: 72px; }
.b-replace { width: 68px; }

.dlg-body {
  flex: 1;
  min-height: 0;
  display: flex;
}

.dlg-left {
  width: 215px;
  flex: none;
  display: flex;
  flex-direction: column;
  padding-top: 1px;
}

.combo {
  height: 19px;
  display: flex;
  align-items: center;
  justify-content: space-between;
  padding: 0 5px 0 3px;
  background-color: #e4e4e4;
  border: 1px solid #a8a8a8;
  white-space: nowrap;
  overflow: hidden;
}

.left-tabs {
  height: 26px;
  display: flex;
  align-items: flex-end;
  flex: none;
}

.left-tab {
  width: 60px;
  height: 23px;
  line-height: 23px;
  text-align: center;
  background-color: #fff;
}

.left-tab + .left-tab {
  width: 57px;
  height: 21px;
  line-height: 21px;
  margin-left: 2px;
  background-color: #f0f0f0;
  border: 1px solid #d8d8d8;
  border-bottom: 0;
}

.tree {
  width: 208px;
  margin-left: 3px;
  height: 535px;
  display: flex;
  flex-direction: column;
  background-color: #fff;
  border: 1px solid #a0a0a0;
  border-bottom-width: 2px;
  padding: 2px 2px 2px;
}

.tree-scroll-area {
  flex: 1;
  min-height: 0;
  overflow: hidden;
}

.row {
  height: 16px;
  line-height: 16px;
  white-space: nowrap;
  position: relative;
}

.row.l0 {
  padding-left: 23px;
}

.row.l1 {
  padding-left: 30px;
}

.row.l2 {
  padding-left: 11px;
}

/* dotted tee and chevron in front of a tree row */
.row.l2::before {
  content: "";
  position: absolute;
  left: 0;
  top: 8px;
  width: 9px;
  border-top: 1px dotted #666;
}

.row.l0::before, .row.l1::before {
  content: "";
  position: absolute;
  top: 4px;
  width: 6px;
  height: 6px;
  border-right: 2px solid #bdbdbd;
  border-top: 2px solid #bdbdbd;
  transform: rotate(45deg);
}

.row.l0::before { left: 6px; }
.row.l1::before { left: 12px; }

.row.open::before {
  border-color: #444;
  transform: rotate(135deg);
  top: 3px;
}

.row.l0.open::before { left: 8px; }
.row.l1.open::before { left: 14px; }

.branch {
  margin-left: 11px;
  border-left: 1px dotted #666;
}

.branch.sub {
  margin-left: 18px;
}

.leaves {
  margin-left: 18px;
  border-left: 1px dotted #666;
}

.picked {
  display: inline-block;
  height: 16px;
  margin-left: -2px;
  padding: 0 4px 0 2px;
  background-color: #cce8ff;
}

.tree-scroll {
  height: 16px;
  flex: none;
}

.tree .sb-arrow { width: 17px; }
.tree .sb-thumb { width: 163px; height: 16px; margin-right: auto; }

.dlg-right {
  flex: 1;
  min-width: 0;
  display: flex;
  flex-direction: column;
  padding: 0 3px 0 4px;
}

.result {
  height: 373px;
  flex: none;
  background-color: #fff;
  border: 1px solid #b4b4b4;
  padding: 1px 0 0;
}

.result-table {
  width: 381px;
  margin-left: -1px;
  table-layout: fixed;
  border-collapse: collapse;
}

.result-table th, .result-table td {
  height: 19px;
  border: 1px solid #c4c4c4;
  font-weight: normal;
  white-space: nowrap;
  overflow: hidden;
  padding: 0 2px;
}

.result-table th {
  height: 20px;
  background-color: #efefef;
}

.result-table th.hot-head {
  background: linear-gradient(#f9dca6, #f5c061);
}

.result-table td.col-n {
  text-align: center;
  background-color: #efefef;
}

.result-table td.hot {
  background-color: #fed58e;
}

.col-n { width: 21px; }
.col-code { width: 113px; }
.col-name { width: 166px; }
.col-unit { width: 81px; }

.code-cell, .unit-cell {
  font-size: 11px;
}

.current .code-cell {
  background-color: #d8eafa;
}

.v-splitter {
  height: 13px;
  flex: none;
  display: flex;
  align-items: center;
  justify-content: center;
  padding-right: 2px;
}

.v-grip {
  width: 99px;
  height: 6px;
  display: flex;
  align-items: center;
  justify-content: space-between;
  padding: 0 5px;
  background-color: #fff;
  border: 1px solid #777;
}

.v-grip i {
  width: 0;
  height: 0;
  border-left: 3px solid transparent;
  border-right: 3px solid transparent;
  border-top: 4px solid #1c2e8a;
}

.v-grip b {
  flex: 1;
  margin: 0 3px;
  border-top: 1px dotted #1c2e8a;
}

.notes {
  flex: 1;
  min-height: 0;
  display: flex;
  gap: 4px;
}

.note {
  display: flex;
  flex-direction: column;
  min-width: 0;
}

.note.left { width: 367px; flex: none; }
.note.right { flex: 1; }

.note-label {
  height: 20px;
  line-height: 22px;
  flex: none;
}

.note-box {
  flex: 1;
  min-height: 0;
  display: flex;
  background-color: #fff;
  border: 1px solid #8f8f8f;
  border-bottom-width: 2px;
}

.note-text {
  flex: 1;
  min-width: 0;
  padding: 2px 0 0 2px;
  line-height: 12.2px;
  white-space: nowrap;
  overflow: hidden;
}

.scrollbar-v {
  width: 16px;
  flex: none;
  display: flex;
  flex-direction: column;
  align-items: center;
  justify-content: space-between;
  padding: 5px 0;
  background-color: #f0f0f0;
  color: #444;
}

.scrollbar-v.flat {
  color: #bbb;
}

.scrollbar-v .sb-thumb {
  width: 16px;
  height: 93px;
  margin-top: 4px;
  margin-bottom: auto;
}

/* annotations */
.mark {
  position: absolute;
  border: 3px solid #f00;
}

.mark-row {
  left: 482px;
  top: 192px;
  width: 378px;
  height: 35px;
}

.mark-node {
  left: 318px;
  top: 382px;
  width: 81px;
  height: 31px;
}

.mark-tick {
  left: 312px;
  top: 372px;
  width: 8px;
  height: 13px;
}

.ime-bar {
  position: absolute;
  left: 26px;
  top: 37px;
  width: 207px;
  height: 24px;
  display: flex;
  align-items: center;
  gap: 7px;
  padding-left: 33px;
  background-color: #f4f5f7;
  border: 1px solid #e2e2e2;
}

.ime-logo {
  position: absolute;
  left: 0;
  top: -3px;
}

.ime-lang {
  font-size: 16px;
  color: #1b78d0;
  font-weight: bold;
}

.ime-punct {
  width: 16px;
  font-size: 16px;
  font-weight: bold;
  color: #1b78d0;
  line-height: 16px;
}
```
